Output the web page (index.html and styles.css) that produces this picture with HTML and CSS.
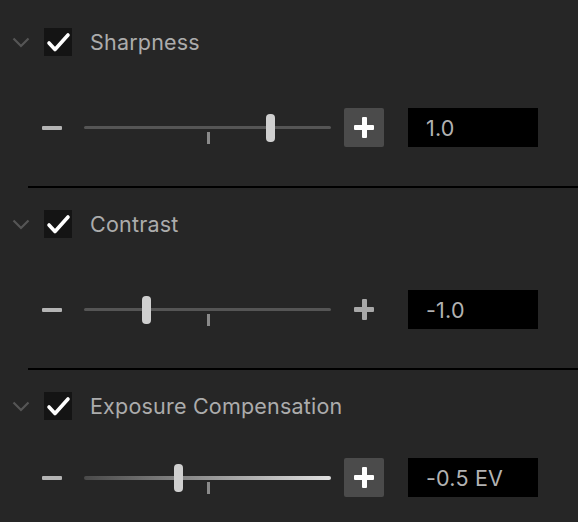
FILE: index.html
```html
<!DOCTYPE html>
<html>
<head>
<meta charset="utf-8">
<link rel="stylesheet" href="styles.css">
</head>
<body>
<div class="panel">
  <section class="group first">
    <div class="header">
      <svg class="chevron" width="18" height="11" viewBox="0 0 18 11"><path d="M1.5 1.5 L9 9 L16.5 1.5" fill="none" stroke="#555" stroke-width="2.2"/></svg>
      <span class="checkbox"><svg width="28" height="28" viewBox="0 0 28 28"><path d="M5 15 L11 21.5 L24 7" fill="none" stroke="#fff" stroke-width="3.6" stroke-linecap="round" stroke-linejoin="round"/></svg></span>
      <span class="title">Sharpness</span>
    </div>
    <div class="row">
      <span class="minus"></span>
      <div class="track">
        <span class="tick"></span>
        <span class="thumb" style="left: 75.3%"></span>
      </div>
      <span class="plus boxed"><span class="plus-h"></span><span class="plus-v"></span></span>
      <span class="value">1.0</span>
    </div>
  </section>
  <section class="group">
    <div class="header">
      <svg class="chevron" width="18" height="11" viewBox="0 0 18 11"><path d="M1.5 1.5 L9 9 L16.5 1.5" fill="none" stroke="#555" stroke-width="2.2"/></svg>
      <span class="checkbox"><svg width="28" height="28" viewBox="0 0 28 28"><path d="M5 15 L11 21.5 L24 7" fill="none" stroke="#fff" stroke-width="3.6" stroke-linecap="round" stroke-linejoin="round"/></svg></span>
      <span class="title">Contrast</span>
    </div>
    <div class="row">
      <span class="minus"></span>
      <div class="track">
        <span class="tick"></span>
        <span class="thumb" style="left: 24.9%"></span>
      </div>
      <span class="plus"><span class="plus-h"></span><span class="plus-v"></span></span>
      <span class="value">-1.0</span>
    </div>
  </section>
  <section class="group last">
    <div class="header">
      <svg class="chevron" width="18" height="11" viewBox="0 0 18 11"><path d="M1.5 1.5 L9 9 L16.5 1.5" fill="none" stroke="#555" stroke-width="2.2"/></svg>
      <span class="checkbox"><svg width="28" height="28" viewBox="0 0 28 28"><path d="M5 15 L11 21.5 L24 7" fill="none" stroke="#fff" stroke-width="3.6" stroke-linecap="round" stroke-linejoin="round"/></svg></span>
      <span class="title">Exposure Compensation</span>
    </div>
    <div class="row">
      <span class="minus"></span>
      <div class="track gradient">
        <span class="tick"></span>
        <span class="thumb" style="left: 38%"></span>
      </div>
      <span class="plus boxed"><span class="plus-h"></span><span class="plus-v"></span></span>
      <span class="value">-0.5 EV</span>
    </div>
  </section>
</div>
</body>
</html>
```

FILE: styles.css
```css
html, body {
  margin: 0;
  padding: 0;
  background: #262626;
}
body {
  width: 578px;
  height: 522px;
  overflow: hidden;
  font-family: Inter, "Liberation Sans", sans-serif;
  color: #ababab;
}
.panel {
  display: flex;
  flex-direction: column;
}
.group {
  padding-top: 22px;
  padding-bottom: 39px;
  border-bottom: 2px solid #000;
  margin-left: 28px;
}
.group.first {
  padding-top: 28px;
}
.group.last {
  border-bottom: none;
}
.header {
  display: flex;
  align-items: center;
  height: 28px;
  margin-left: -16px;
}
.chevron {
  display: block;
  width: 18px;
  height: 11px;
}
.checkbox {
  display: block;
  width: 28px;
  height: 28px;
  margin-left: 14px;
  background: #141414;
}
.checkbox svg {
  display: block;
}
.title {
  margin-left: 18px;
  font-size: 21.5px;
  letter-spacing: 0.2px;
  color: #acacac;
}
.row {
  display: flex;
  align-items: center;
  height: 39px;
  margin-top: 52px;
  margin-left: 14px;
}
.group.last .row {
  margin-top: 38px;
}
.minus {
  display: block;
  width: 20px;
  height: 4px;
  background: #b4b4b4;
  border-radius: 1px;
}
.track {
  position: relative;
  width: 247px;
  height: 3px;
  margin-left: 22px;
  background: #555;
  border-radius: 2px;
}
.track.gradient {
  height: 4px;
  background: linear-gradient(to right, #4a4a4a, #e0e0e0);
}
.tick {
  position: absolute;
  left: 123px;
  top: 6px;
  width: 3px;
  height: 12px;
  background: #8a8a8a;
}
.thumb {
  position: absolute;
  top: 50%;
  width: 9px;
  height: 28px;
  margin-left: -4px;
  margin-top: -14px;
  background: #cfcfcf;
  border-radius: 4px;
}
.plus {
  position: relative;
  display: block;
  width: 40px;
  height: 39px;
  margin-left: 13px;
  border-radius: 2px;
}
.plus.boxed {
  background: #4b4b4b;
}
.plus-h, .plus-v {
  position: absolute;
  background: #a8a8a8;
  border-radius: 1px;
}
.boxed .plus-h, .boxed .plus-v {
  background: #fff;
}
.plus-h {
  left: 10px;
  top: 17px;
  width: 20px;
  height: 5px;
}
.plus-v {
  left: 17.5px;
  top: 9px;
  width: 5px;
  height: 21px;
}
.value {
  display: flex;
  align-items: center;
  box-sizing: border-box;
  width: 130px;
  height: 39px;
  margin-left: 24px;
  padding-left: 18px;
  background: #000;
  font-size: 21.5px;
  letter-spacing: 0.2px;
  color: #b2b2b2;
}
```
